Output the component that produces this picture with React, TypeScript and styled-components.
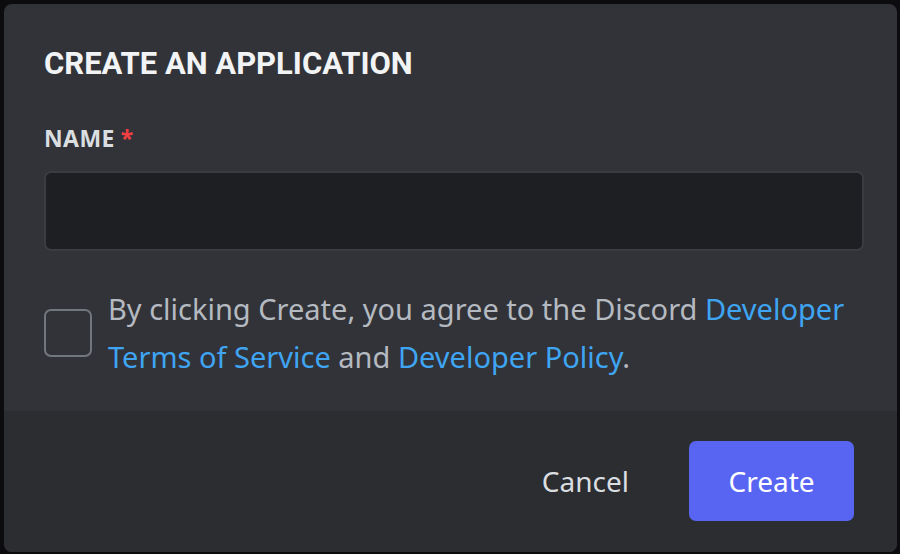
import React from "react";
import styled, { createGlobalStyle } from "styled-components";

const Global = createGlobalStyle`
  html, body { margin: 0; padding: 0; background: #0c0c0e; }
  body { font-family: "Noto Sans", "Open Sans", sans-serif; overflow: hidden; }
  * { box-sizing: border-box; }
`;

const Page = styled.div`
  position: relative;
  width: 900px;
  height: 554px;
  padding: 4px 3px 2px 4px;
  background: #0c0c0e;
  overflow: hidden;
`;

const BackdropText = styled.div`
  position: absolute;
  left: -4px;
  top: -28px;
  font-size: 26px;
  color: #3a3b40;
  font-family: "Noto Sans", sans-serif;
  white-space: nowrap;
`;

const Modal = styled.div`
  position: relative;
  height: 548px;
  border-radius: 8px;
  background: #313338;
  display: flex;
  flex-direction: column;
  overflow: hidden;
`;

const Body = styled.div`
  flex: 1;
  padding: 41px 33px 0 40px;
  display: flex;
  flex-direction: column;
`;

const Title = styled.h1`
  margin: 0;
  font-family: Roboto, "Noto Sans", sans-serif;
  font-weight: 700;
  font-size: 31px;
  line-height: 38px;
  color: #f2f3f5;
`;

const Label = styled.label`
  margin-top: 41px;
  display: flex;
  gap: 6px;
  font-weight: 700;
  font-size: 23px;
  line-height: 28px;
  letter-spacing: 0.4px;
  color: #dbdee1;
`;

const Required = styled.span`
  color: #f23f42;
`;

const Input = styled.input`
  margin-top: 19px;
  height: 80px;
  width: 100%;
  background: #1e1f22;
  border: 2px solid #3a3c42;
  border-radius: 7px;
  outline: none;
  color: #dbdee1;
  font-size: 26px;
  padding: 0 18px;
`;

const Agree = styled.div`
  margin-top: 34px;
  display: flex;
  align-items: center;
  gap: 16px;
`;

const Check = styled.div`
  flex: none;
  width: 48px;
  height: 48px;
  border: 2px solid #72767d;
  border-radius: 7px;
`;

const AgreeText = styled.p`
  margin: 0;
  font-size: 29px;
  line-height: 48px;
  color: #b5bac1;
`;

const Link = styled.a`
  color: #3fa5f2;
  text-decoration: none;
`;

const Footer = styled.div`
  height: 141px;
  flex: none;
  background: #2b2d31;
  display: flex;
  align-items: center;
  justify-content: flex-end;
  gap: 60px;
  padding: 0 43px 1px 0;
`;

const TextButton = styled.button`
  background: none;
  border: none;
  font-family: "Noto Sans", sans-serif;
  font-size: 28px;
  color: #dbdee1;
  padding: 0;
`;

const PrimaryButton = styled.button`
  width: 165px;
  height: 80px;
  border: none;
  border-radius: 7px;
  background: #5865f2;
  color: #ffffff;
  font-family: "Noto Sans", sans-serif;
  font-size: 28px;
`;

export default function App() {
  return (
    <>
      <Global />
      <Page>
        <BackdropText>has been created</BackdropText>
        <Modal>
          <Body>
            <Title>CREATE AN APPLICATION</Title>
            <Label>
              NAME<Required>*</Required>
            </Label>
            <Input />
            <Agree>
              <Check />
              <AgreeText>
                By clicking Create, you agree to the Discord{" "}
                <Link href="#">Developer Terms of Service</Link> and{" "}
                <Link href="#">Developer Policy</Link>.
              </AgreeText>
            </Agree>
          </Body>
          <Footer>
            <TextButton>Cancel</TextButton>
            <PrimaryButton>Create</PrimaryButton>
          </Footer>
        </Modal>
      </Page>
    </>
  );
}
